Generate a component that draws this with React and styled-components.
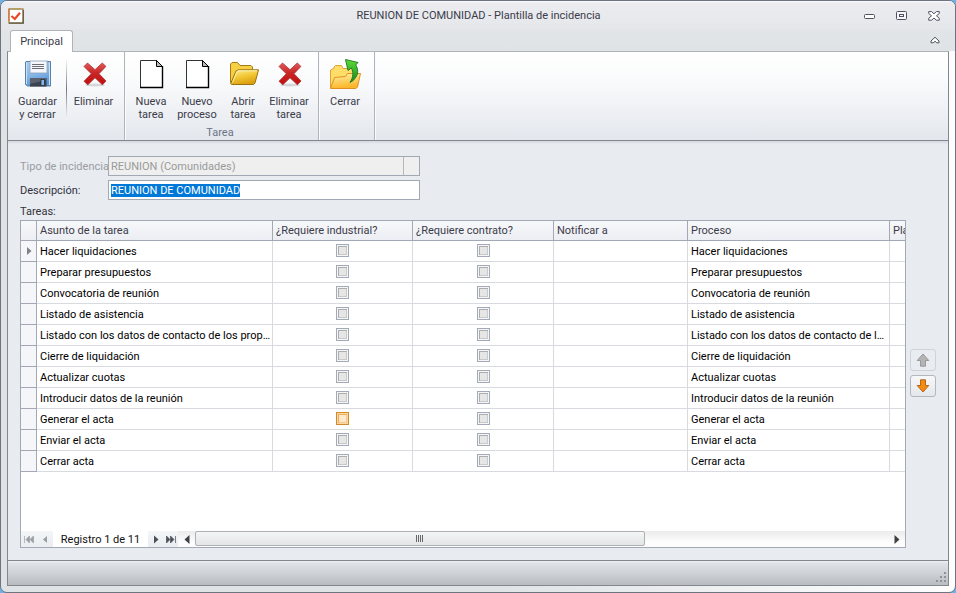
import React, { useEffect, useRef, useState } from "react";
import styled, { createGlobalStyle } from "styled-components";

const GlobalStyle = createGlobalStyle`
  *, *::before, *::after { box-sizing: border-box; }
  body {
    margin: 0;
    background: #6fb1e4;
    color: #3b3b4a;
    font: 11px/13px Roboto, "DejaVu Sans Condensed", sans-serif;
  }
  button, input, select { font: inherit; color: inherit; margin: 0; }
  button { border: 0; padding: 0; background: none; }
  svg { display: block; }
`;

const LINE = "#a2a9b4";

const WindowFrame = styled.main`
  display: flex;
  flex-direction: column;
  min-height: 100vh;
  border: 1px solid #6d7480;
  border-radius: 7px;
  overflow: hidden;
  padding: 0 6px 6px;
  background: linear-gradient(to right, #dfe3e6 0, #dfe3e6 50%, #fdfdfe 100%);
`;

const TitleBar = styled.header`
  display: grid;
  grid-template-columns: 90px 1fr 90px;
  align-items: center;
  height: 29px;
  margin: 0 -6px;
  padding: 0 6px 0 7px;
  background: linear-gradient(#fbfbfc 0, #ececf0 2px, #e4e7ea);
`;

const WindowTitle = styled.h1`
  margin: 0;
  font-size: 11px;
  font-weight: normal;
  text-align: center;
`;

const WindowControls = styled.div`
  display: flex;
  justify-content: flex-end;
  gap: 12px;
  padding-right: 5px;
`;

const ControlButton = styled.button`
  width: 20px;
  height: 14px;
  display: grid;
  place-items: center;
`;

const TabStrip = styled.nav`
  display: flex;
  align-items: center;
  justify-content: space-between;
  height: 21px;
  margin: 0 -6px;
  padding: 0 10px 0 9px;
  background: linear-gradient(#e2e5e8, #dfe3e5);
`;

const RibbonTab = styled.button`
  align-self: flex-start;
  height: 22px;
  width: 63px;
  z-index: 1;
  border: 1px solid #b0b4b9;
  border-bottom: 0;
  border-radius: 3px 3px 0 0;
  background: #fff;
`;

const Ribbon = styled.section`
  display: flex;
  height: 90px;
  border: 1px solid #83888f;
  border-top-color: #b0b4b9;
  background: linear-gradient(#ffffff 0, #f9fafb 35%, #e3e7ed 100%);
`;

const RibbonGroup = styled.div`
  display: flex;
  flex-direction: column;
  justify-content: space-between;
  padding: 6px 6px 1px 3px;
  border-right: 1px solid #b0b5bb;
  box-shadow: 1px 0 #fafbfc;
`;

const RibbonItems = styled.div`
  display: flex;
`;

const RibbonSeparator = styled.span`
  width: 1px;
  height: 58px;
  margin: 2px 2px 0;
  background: linear-gradient(#f4f4f6, #73777d 50%, #f0f1f4);
`;

const RibbonButton = styled.button`
  display: flex;
  flex-direction: column;
  align-items: center;
  gap: 5px;
  width: ${(p) => p.$width || 46}px;
  white-space: nowrap;
`;

const ButtonLabel = styled.span`
  width: min-content;
  white-space: pre-line;
  text-align: center;
`;

const GroupCaption = styled.span`
  height: 13px;
  text-align: center;
  color: #6c7389;
`;

const Content = styled.section`
  flex: 1;
  display: flex;
  flex-direction: column;
  padding: 15px 12px 12px;
  border: solid #83888f;
  border-width: 0 1px;
  background: #e8ebf0;
  box-shadow: inset 0 3px 3px -2px #cdd1d8;
`;

const FormRows = styled.div`
  display: grid;
  grid-template-columns: 88px minmax(0, 312px);
  grid-auto-rows: 20px;
  gap: 4px 0;
  align-items: center;
`;

const FieldLabel = styled.label`
  color: ${(p) => (p.$disabled ? "#9a9da4" : "#32323c")};
  white-space: nowrap;
`;

const TypeSelect = styled.select`
  appearance: none;
  width: 100%;
  height: 20px;
  padding: 0 18px 0 2px;
  border: 1px solid ${LINE};
  border-radius: 0;
  color: #9a9a9a;
  opacity: 1;
  background: linear-gradient(#b4b7bc, #b4b7bc) right 15px top / 1px 100% no-repeat #efefef;
`;

const DescriptionInput = styled.input`
  width: 100%;
  height: 20px;
  padding: 0 2px;
  border: 1px solid ${LINE};
  outline: 0;
  background: #fff;
  color: #222;
  &::selection { background: #0078d7; color: #fff; }
`;

const TasksLabel = styled.h2`
  margin: 0;
  height: 20px;
  padding-top: 5px;
  font-size: 11px;
  font-weight: normal;
  color: #32323c;
`;

const TasksArea = styled.div`
  flex: 1;
  display: flex;
  gap: 4px;
`;

const GridPanel = styled.div`
  flex: 1;
  min-width: 0;
  display: flex;
  flex-direction: column;
  border: 1px solid ${LINE};
  background: #fff;
`;

const GridViewport = styled.div`
  flex: 1;
  overflow: hidden;
`;

const TaskTable = styled.table`
  table-layout: fixed;
  width: 969px;
  border-spacing: 0;
`;

const HeadCell = styled.th`
  height: 20px;
  padding: 0 3px;
  border: solid ${LINE};
  border-width: 0 1px 1px 0;
  background: linear-gradient(#f7f8fa, #ebeef3);
  font-weight: normal;
  text-align: left;
  white-space: nowrap;
`;

const IndicatorCell = styled.td`
  height: 21px;
  padding: 0 0 0 6px;
  border: solid ${LINE};
  border-width: 0 1px 1px 0;
  background: #f4f6f9;
`;

const Cell = styled.td`
  height: 21px;
  padding: 0 1px 0 3px;
  border: solid #d7dade;
  border-width: 0 1px 1px 0;
  color: #000;
  white-space: nowrap;
  overflow: hidden;
  text-overflow: ellipsis;
`;

const CheckCell = styled(Cell)`
  padding: 0 0 1px;
`;

const CheckBox = styled.input`
  appearance: none;
  display: block;
  width: 13px;
  height: 13px;
  margin: 0 auto;
  border: 1px solid ${(p) => (p.$hot ? "#d08a2c" : "#a2a9b8")};
  background: ${(p) => (p.$hot ? "#fdeacb" : "#e6e6e6")};
  box-shadow: ${(p) =>
    p.$hot
      ? "inset 0 0 0 1px #fdd9a0, inset 2px 2px #f5ab5c, inset -2px -2px #f9c88e"
      : "inset 0 0 0 1px #f6f6f6, inset 2px 2px #adadad, inset -2px -2px #c9c9c9"};
`;

const GridFooter = styled.div`
  display: flex;
  height: 16px;
`;

const NavGroup = styled.div`
  display: flex;
  align-items: center;
  width: ${(p) => p.$width}px;
  background: linear-gradient(#f3f5f7, #eaedf1);
`;

const NavButton = styled.button`
  flex: 1;
  height: 16px;
  display: grid;
  place-items: center;
  color: ${(p) => (p.disabled ? "#9b9ea3" : "#4b5058")};
`;

const RecordText = styled.span`
  width: 95px;
  text-align: center;
  line-height: 17px;
  color: #111;
`;

const ScrollBar = styled.div`
  flex: 1;
  display: flex;
  background: linear-gradient(#ebebeb, #fdfdfd 70%);
`;

const ScrollButton = styled.button`
  width: 17px;
  height: 16px;
  display: grid;
  place-items: center;
  color: #3f4043;
`;

const ScrollTrack = styled.div`
  flex: 1;
`;

const ScrollThumb = styled.div`
  display: grid;
  place-items: center;
  width: 65%;
  height: 15px;
  border: 1px solid #adb0b4;
  border-radius: 2px;
  background: linear-gradient(#f4f5f5, #e4e5e6);
`;

const MoveButtons = styled.div`
  display: flex;
  flex-direction: column;
  justify-content: center;
  gap: 4px;
  padding-bottom: 22px;
`;

const MoveButton = styled.button`
  display: grid;
  place-items: center;
  width: 26px;
  height: 22px;
  border: 1px solid ${(p) => (p.disabled ? "#cfd2d7" : "#b3b8bf")};
  border-radius: 3px;
  background: ${(p) => (p.disabled ? "#e9ecf0" : "linear-gradient(#f7f8f9, #e4e7eb)")};
`;

const StatusBar = styled.footer`
  display: flex;
  align-items: flex-end;
  justify-content: flex-end;
  height: 26px;
  padding: 0 1px 2px;
  border: 1px solid #83888f;
  background: linear-gradient(#f0f2f4 0, #e0e3e8 2px, #b9bcc1);
`;

function AppIcon() {
  return (
    <svg width="16" height="16" viewBox="0 0 16 16">
      <rect x="1" y="1" width="14" height="14" fill="#fff" stroke="#a08a50" strokeWidth="1.4" />
      <path d="M1 .8H13" stroke="#b09a60" strokeWidth="1.2" />
      <path d="M.9 1V13" stroke="#e0703c" strokeWidth="1.2" />
      <path d="M1 15.2H15.3V2" stroke="#5f5a48" strokeWidth="1.2" fill="none" />
      <path d="M3.500 8l3.300 3L12 4.800" fill="none" stroke="#e8482a" strokeWidth="2.2" />
    </svg>
  );
}

function SaveIcon() {
  return (
    <svg width="32" height="32" viewBox="0 0 32 32">
      <defs>
        <linearGradient id="disk" x1="0" y1="0" x2="0.3" y2="1">
          <stop offset="0" stopColor="#a9cdef" />
          <stop offset="0.5" stopColor="#8fbce8" />
          <stop offset="1" stopColor="#5797d8" />
        </linearGradient>
      </defs>
      <path d="M4 3.5h24.5v24.5h-23L3.5 26.5V4z" fill="url(#disk)" stroke="#5d7fa6" />
      <path d="M4.5 4.5v21.5M27.5 4.5v22.5" stroke="#c9e1f7" />
      <rect x="8" y="3" width="17" height="12" fill="#f5f7fa" stroke="#8aa4c4" strokeWidth=".8" />
      <path d="M10 6.5h12M10 8.5h12M10 10.5h12" stroke="#6c6f76" />
      <rect x="8" y="20" width="16.500" height="8.500" fill="#3b424d" />
      <path d="M8 20h16.500v2l-16.500 4z" fill="#59616d" />
      <rect x="19" y="21.500" width="3.500" height="6" fill="#82b6ec" stroke="#222" strokeWidth=".7" />
    </svg>
  );
}

function DeleteIcon() {
  return (
    <svg width="32" height="32" viewBox="0 0 32 32">
      <defs>
        <linearGradient id="cross" x1="0" y1="0" x2="0" y2="1">
          <stop offset="0" stopColor="#e4595a" />
          <stop offset="0.45" stopColor="#c92626" />
          <stop offset="1" stopColor="#c30d0d" />
        </linearGradient>
      </defs>
      <ellipse cx="17" cy="27" rx="10" ry="1.500" fill="#d5d7db" />
      <path
        d="M9.500 5L17 11.700 24.300 5l3.600 3.400L21 15.700l7 7.300-3.600 3.800L17 19.800 9.800 26.800 6 23.300l7.300-7.500L6 8.500z"
        fill="url(#cross)"
        stroke="#a33232"
        strokeWidth=".8"
        strokeLinejoin="round"
      />
    </svg>
  );
}

function PageIcon() {
  return (
    <svg width="32" height="32" viewBox="0 0 32 32">
      <path d="M5.500 2.500H21.500L27.500 8.500V29.500H5.500z" fill="#fff" stroke="#333" />
      <path d="M27.500 8v21.500H5" fill="none" stroke="#000" strokeWidth="1.400" />
      <path d="M21.500 2.500V8.500H27.500z" fill="#b9b9b9" stroke="#000" />
    </svg>
  );
}

function FolderIcon() {
  return (
    <svg width="32" height="32" viewBox="0 0 32 32">
      <defs>
        <linearGradient id="folder" x1="0" y1="0" x2="0.4" y2="1">
          <stop offset="0" stopColor="#fdf0a4" />
          <stop offset="0.5" stopColor="#f3cb39" />
          <stop offset="1" stopColor="#dda010" />
        </linearGradient>
      </defs>
      <path d="M3.500 24.500V6L5 4.500h5.500L13 7.500h11l1.500 1.500v3z" fill="#f6cf43" stroke="#a37c14" />
      <path d="M3.700 25.500L9 13l2.500-1.200H31.500L28 25l-1.500 1.500H4.500z" fill="url(#folder)" stroke="#9a7210" />
      <path d="M5.500 24.500L10 13.500l2-.7h18" fill="none" stroke="#fff4bb" strokeWidth=".9" />
    </svg>
  );
}

function CloseFolderIcon() {
  return (
    <svg width="32" height="32" viewBox="0 0 32 32">
      <defs>
        <linearGradient id="exitFolder" x1="0" y1="0" x2="0.3" y2="1">
          <stop offset="0" stopColor="#fff3a8" />
          <stop offset="1" stopColor="#fcb62a" />
        </linearGradient>
        <linearGradient id="exitArrow" x1="0" y1="0" x2="0" y2="1">
          <stop offset="0" stopColor="#5ddc37" />
          <stop offset="1" stopColor="#16871c" />
        </linearGradient>
      </defs>
      <path d="M1.500 29.500V12l3.500-1.500V9L6.500 7.500h6L14 10.500h11v7z" fill="#fede68" stroke="#e2a233" />
      <path d="M1.500 30.500L5.500 19.500 16.500 18.500l2-3H31.500L28.500 29l-1.500 1.500z" fill="url(#exitFolder)" stroke="#e08f22" />
      <path
        d="M16.500 1.500L29 4.500 26.700 7C30.200 12 29.500 20 21 24.500 24.500 19 24.500 13.500 22.300 10L19 12.500z"
        fill="url(#exitArrow)"
        stroke="#1c7422"
        strokeWidth=".9"
      />
    </svg>
  );
}

function NavIcon({ kind }) {
  const paths = {
    first: <path d="M0.500 1v7M5.500 1L2 4.500 5.500 8zM9.500 1L6 4.500 9.500 8z" stroke="currentColor" strokeWidth=".7" />,
    prev: <path d="M7 1L3 4.500 7 8z" />,
    next: <path d="M3 .5L7.500 4.500 3 8.500z" />,
    last: <path d="M9.500 1v7M4.500 1L8 4.500 4.500 8zM.500 1L4 4.500.500 8z" stroke="currentColor" strokeWidth=".7" />,
    left: <path d="M7.500 0v9L2.500 4.500z" />,
    right: <path d="M2.500 0v9l5-4.500z" />,
  };
  return (
    <svg width="10" height="9" viewBox="0 0 10 9" fill="currentColor">
      {paths[kind]}
    </svg>
  );
}

function ArrowIcon({ down, fill, stroke }) {
  return (
    <svg width="14" height="14" viewBox="0 0 14 14">
      <path
        d={down ? "M4.500.8h5v5.700h3.300L7 13 1.200 6.500h3.300z" : "M4.500 13.200h5V7.500h3.300L7 1 1.200 7.500h3.300z"}
        fill={fill}
        stroke={stroke}
      />
    </svg>
  );
}

function RibbonAction({ icon, label, width }) {
  return (
    <RibbonButton type="button" $width={width}>
      {icon}
      <ButtonLabel>{label}</ButtonLabel>
    </RibbonButton>
  );
}

const TASKS = [
  "Hacer liquidaciones",
  "Preparar presupuestos",
  "Convocatoria de reunión",
  "Listado de asistencia",
  "Listado con los datos de contacto de los propietarios",
  "Cierre de liquidación",
  "Actualizar cuotas",
  "Introducir datos de la reunión",
  "Generar el acta",
  "Enviar el acta",
  "Cerrar acta",
];

export default function App() {
  const description = useRef(null);
  const [text, setText] = useState("REUNION DE COMUNIDAD");

  useEffect(() => {
    description.current.focus();
    description.current.select();
  }, []);

  return (
    <>
      <GlobalStyle />
      <WindowFrame>
        <TitleBar>
          <AppIcon />
          <WindowTitle>REUNION DE COMUNIDAD - Plantilla de incidencia</WindowTitle>
          <WindowControls>
            <ControlButton type="button" aria-label="Minimizar">
              <svg width="12" height="12" viewBox="0 0 12 12">
                <rect x="0.500" y="4.500" width="10" height="4" rx="1" fill="#fff" stroke="#4c5260" />
              </svg>
            </ControlButton>
            <ControlButton type="button" aria-label="Restaurar">
              <svg width="12" height="10" viewBox="0 0 12 10" fill="#f5f6f8" stroke="#4c5260">
                <rect x="0.500" y="0.500" width="10" height="8" rx="1" />
                <rect x="3.500" y="3.500" width="4" height="2" />
              </svg>
            </ControlButton>
            <ControlButton type="button" aria-label="Cerrar ventana">
              <svg width="12" height="10" viewBox="0 0 12 10">
                <path
                  d="M.700.600h3L6 2.800 8.300.600h3v1.800L8.500 4.800l2.800 2.500v1.900h-3L6 7 3.700 9.200h-3V7.300l2.800-2.500L.700 2.400z"
                  fill="#fff"
                  stroke="#4c5260"
                />
              </svg>
            </ControlButton>
          </WindowControls>
        </TitleBar>

        <TabStrip>
          <RibbonTab type="button">Principal</RibbonTab>
          <ControlButton type="button" aria-label="Contraer la cinta">
            <svg width="10" height="9" viewBox="0 0 10 9">
              <path
                d="M5 1.200L9 5v1.800H6.800L5 5.300 3.200 6.800H1V5z"
                fill="#fff"
                stroke="#4c5260"
                strokeLinejoin="round"
              />
            </svg>
          </ControlButton>
        </TabStrip>

        <Ribbon>
          <RibbonGroup>
            <RibbonItems>
              <RibbonAction icon={<SaveIcon />} label={"Guardar\ny\u00a0cerrar"} width={53} />
              <RibbonSeparator />
              <RibbonAction icon={<DeleteIcon />} label="Eliminar" width={49} />
            </RibbonItems>
          </RibbonGroup>
          <RibbonGroup>
            <RibbonItems>
              <RibbonAction icon={<PageIcon />} label={"Nueva\ntarea"} />
              <RibbonAction icon={<PageIcon />} label={"Nuevo\nproceso"} />
              <RibbonAction icon={<FolderIcon />} label={"Abrir\ntarea"} />
              <RibbonAction icon={<DeleteIcon />} label={"Eliminar\ntarea"} />
            </RibbonItems>
            <GroupCaption>Tarea</GroupCaption>
          </RibbonGroup>
          <RibbonGroup>
            <RibbonItems>
              <RibbonAction icon={<CloseFolderIcon />} label="Cerrar" />
            </RibbonItems>
          </RibbonGroup>
        </Ribbon>

        <Content>
          <FormRows>
            <FieldLabel htmlFor="tipo" $disabled>
              Tipo de incidencia
            </FieldLabel>
            <TypeSelect id="tipo" disabled>
              <option>REUNION (Comunidades)</option>
            </TypeSelect>
            <FieldLabel htmlFor="descripcion">Descripción:</FieldLabel>
            <DescriptionInput
              id="descripcion"
              ref={description}
              value={text}
              onChange={(e) => setText(e.target.value)}
            />
          </FormRows>

          <TasksLabel id="tareas">Tareas:</TasksLabel>
          <TasksArea>
            <GridPanel>
              <GridViewport>
                <TaskTable aria-labelledby="tareas">
                  <colgroup>
                    <col width="16" />
                    <col width="236" />
                    <col width="140" />
                    <col width="141" />
                    <col width="134" />
                    <col width="202" />
                    <col width="100" />
                  </colgroup>
                  <thead>
                    <tr>
                      <HeadCell />
                      <HeadCell>Asunto de la tarea</HeadCell>
                      <HeadCell>¿Requiere industrial?</HeadCell>
                      <HeadCell>¿Requiere contrato?</HeadCell>
                      <HeadCell>Notificar a</HeadCell>
                      <HeadCell>Proceso</HeadCell>
                      <HeadCell>Pla</HeadCell>
                    </tr>
                  </thead>
                  <tbody>
                    {TASKS.map((task, i) => (
                      <tr key={task}>
                        <IndicatorCell>
                          {i === 0 && (
                            <svg width="5" height="8" viewBox="0 0 5 8">
                              <path d="M0 0l4.500 4L0 8z" fill="#7d828b" />
                            </svg>
                          )}
                        </IndicatorCell>
                        <Cell>{task}</Cell>
                        <CheckCell>
                          <CheckBox
                            type="checkbox"
                            aria-label={`¿Requiere industrial? ${task}`}
                            $hot={i === 8}
                          />
                        </CheckCell>
                        <CheckCell>
                          <CheckBox type="checkbox" aria-label={`¿Requiere contrato? ${task}`} />
                        </CheckCell>
                        <Cell />
                        <Cell>{task}</Cell>
                        <Cell />
                      </tr>
                    ))}
                  </tbody>
                </TaskTable>
              </GridViewport>
              <GridFooter>
                <NavGroup $width={32}>
                  <NavButton type="button" disabled aria-label="Primero">
                    <NavIcon kind="first" />
                  </NavButton>
                  <NavButton type="button" disabled aria-label="Anterior">
                    <NavIcon kind="prev" />
                  </NavButton>
                </NavGroup>
                <RecordText>Registro 1 de 11</RecordText>
                <NavGroup $width={30}>
                  <NavButton type="button" aria-label="Siguiente">
                    <NavIcon kind="next" />
                  </NavButton>
                  <NavButton type="button" aria-label="Último">
                    <NavIcon kind="last" />
                  </NavButton>
                </NavGroup>
                <ScrollBar>
                  <ScrollButton type="button" aria-label="Desplazar a la izquierda">
                    <NavIcon kind="left" />
                  </ScrollButton>
                  <ScrollTrack>
                    <ScrollThumb>
                      <svg width="8" height="7" viewBox="0 0 8 7">
                        <path d="M.500 0v7M2.500 0v7M4.500 0v7M6.500 0v7" stroke="#63666b" />
                      </svg>
                    </ScrollThumb>
                  </ScrollTrack>
                  <ScrollButton type="button" aria-label="Desplazar a la derecha">
                    <NavIcon kind="right" />
                  </ScrollButton>
                </ScrollBar>
              </GridFooter>
            </GridPanel>
            <MoveButtons>
              <MoveButton type="button" disabled aria-label="Subir">
                <ArrowIcon fill="#b4b4b4" stroke="#999" />
              </MoveButton>
              <MoveButton type="button" aria-label="Bajar">
                <ArrowIcon down fill="#f58a10" stroke="#b5651c" />
              </MoveButton>
            </MoveButtons>
          </TasksArea>
        </Content>

        <StatusBar>
          <svg width="12" height="12" viewBox="0 0 12 12" fill="#8f9399">
            <path d="M9 1h2v2H9zM5 5h2v2H5zM9 5h2v2H9zM1 9h2v2H1zM5 9h2v2H5zM9 9h2v2H9z" />
          </svg>
        </StatusBar>
      </WindowFrame>
    </>
  );
}
